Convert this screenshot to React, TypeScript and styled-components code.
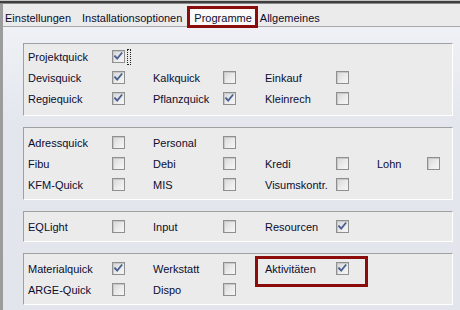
import React from 'react';
import styled, { createGlobalStyle } from 'styled-components';

type Item = { label: string; checked?: boolean; focus?: boolean; marked?: boolean };

// label column widths, one per field column
const LABEL_W = [84, 70, 71, 50];

const GROUPS: Item[][][] = [
  [
    [{ label: 'Projektquick', checked: true, focus: true }],
    [
      { label: 'Devisquick', checked: true },
      { label: 'Kalkquick' },
      { label: 'Einkauf' },
    ],
    [
      { label: 'Regiequick', checked: true },
      { label: 'Pflanzquick', checked: true },
      { label: 'Kleinrech' },
    ],
  ],
  [
    [{ label: 'Adressquick' }, { label: 'Personal' }],
    [{ label: 'Fibu' }, { label: 'Debi' }, { label: 'Kredi' }, { label: 'Lohn' }],
    [{ label: 'KFM-Quick' }, { label: 'MIS' }, { label: 'Visumskontr.' }],
  ],
  [[{ label: 'EQLight' }, { label: 'Input' }, { label: 'Resourcen', checked: true }]],
  [
    [
      { label: 'Materialquick', checked: true },
      { label: 'Werkstatt' },
      { label: 'Aktivitäten', checked: true, marked: true },
    ],
    [{ label: 'ARGE-Quick' }, { label: 'Dispo' }],
  ],
];

const TABS = ['Einstellungen', 'Installationsoptionen', 'Programme', 'Allgemeines'];

const GlobalStyle = createGlobalStyle`
  html, body {
    margin: 0;
    padding: 0;
    overflow: hidden;
    background: #e3e6ed;
  }
  * {
    box-sizing: border-box;
  }
`;

const Window = styled.div`
  width: 460px;
  height: 310px;
  display: flex;
  flex-direction: column;
  font-family: 'Liberation Sans', Arial, sans-serif;
  font-size: 11px;
  color: #0c0c2e;
`;

const TopBar = styled.div`
  height: 4px;
  flex: none;
  background: linear-gradient(180deg, #c4c4c4 0 1px, #3e3e3e 1px 3px, #8a8a8a 3px 4px);
`;

const Body = styled.div`
  flex: 1;
  display: flex;
  flex-direction: column;
  border-left: 3px solid #9c9c9c;
`;

const TabBar = styled.div`
  height: 23px;
  flex: none;
  display: flex;
  align-items: flex-start;
  background: #ebebeb;
  border-bottom: 1px solid #a8a8a8;
`;

const Tab = styled.div<{ $active?: boolean }>`
  position: relative;
  z-index: 1;
  height: 22px;
  padding: 8px 6px 0;
  line-height: 13px;
  white-space: nowrap;

  &:first-child {
    padding-left: 2px;
    padding-right: 5px;
  }

  ${(p) =>
    p.$active &&
    `
    margin: 2px -4px 0 -1px;
    padding: 3px 3px 0 4px;
    background: #fafafa;
    border: 3px solid #8c0b0b;
  `}
`;

const Content = styled.div`
  flex: 1;
  display: flex;
  flex-direction: column;
  gap: 11px;
  padding: 16px 7px 0 20px;
  background: linear-gradient(180deg, #eff1f6 0%, #e3e6ed 35%, #e2e5ec 100%);
`;

const Group = styled.div<{ $tight?: boolean }>`
  background: #ebebeb;
  border-top: 1px solid #a0a0a0;
  border-left: 1px solid #a0a0a0;
  border-right: 1px solid #ffffff;
  border-bottom: 1px solid #ffffff;
  padding: ${(p) => (p.$tight ? '2px 0 6px 4px' : '4px 0 4px 4px')};
`;

const Row = styled.div`
  height: 21px;
  display: grid;
  grid-template-columns: 125px 112px 112px auto;
`;

const Field = styled.div<{ $lw: number; $marked?: boolean }>`
  position: relative;
  display: grid;
  grid-template-columns: ${(p) => p.$lw}px 13px auto;
  align-items: center;
  height: 21px;

  ${(p) =>
    p.$marked &&
    `
    &::after {
      content: '';
      position: absolute;
      left: -10px;
      top: -2px;
      width: 107px;
      height: 25px;
      border: 3px solid #8c0b0b;
      pointer-events: none;
    }
  `}
`;

const Label = styled.span`
  line-height: 13px;
  padding-top: 1px;
  white-space: nowrap;
`;

const Box = styled.span`
  width: 13px;
  height: 13px;
  display: block;
  border: 1px solid #8e8f8f;
  background: linear-gradient(135deg, #d6d6d6 0%, #ebebeb 55%, #f6f6f6 100%);
  box-shadow: inset 1px 1px 0 #c8c8c8;

  svg {
    display: block;
  }
`;

const FocusRect = styled.span`
  width: 4px;
  height: 16px;
  margin-left: 2px;
  margin-top: 1px;
  border: 1px dotted #222;
`;

const CheckBox = ({ checked }: { checked?: boolean }) => (
  <Box>
    {checked && (
      <svg width="11" height="11" viewBox="0 0 11 11">
        <path
          d="M2 5.2 L4.2 7.6 L8.6 2.2"
          fill="none"
          stroke="#4a5f93"
          strokeWidth="1.8"
          strokeLinecap="square"
        />
      </svg>
    )}
  </Box>
);

const App = () => {
  return (
    <>
      <GlobalStyle />
      <Window>
        <TopBar />
        <Body>
          <TabBar>
            {TABS.map((t) => (
              <Tab key={t} $active={t === 'Programme'}>
                {t}
              </Tab>
            ))}
          </TabBar>
          <Content>
            {GROUPS.map((rows, gi) => (
              <Group key={gi} $tight={gi === 0}>
                {rows.map((row, ri) => (
                  <Row key={ri}>
                    {row.map((item, ci) => (
                      <Field key={item.label} $lw={LABEL_W[ci]} $marked={item.marked}>
                        <Label>{item.label}</Label>
                        <CheckBox checked={item.checked} />
                        {item.focus && <FocusRect />}
                      </Field>
                    ))}
                  </Row>
                ))}
              </Group>
            ))}
          </Content>
        </Body>
      </Window>
    </>
  );
};

export default App;
